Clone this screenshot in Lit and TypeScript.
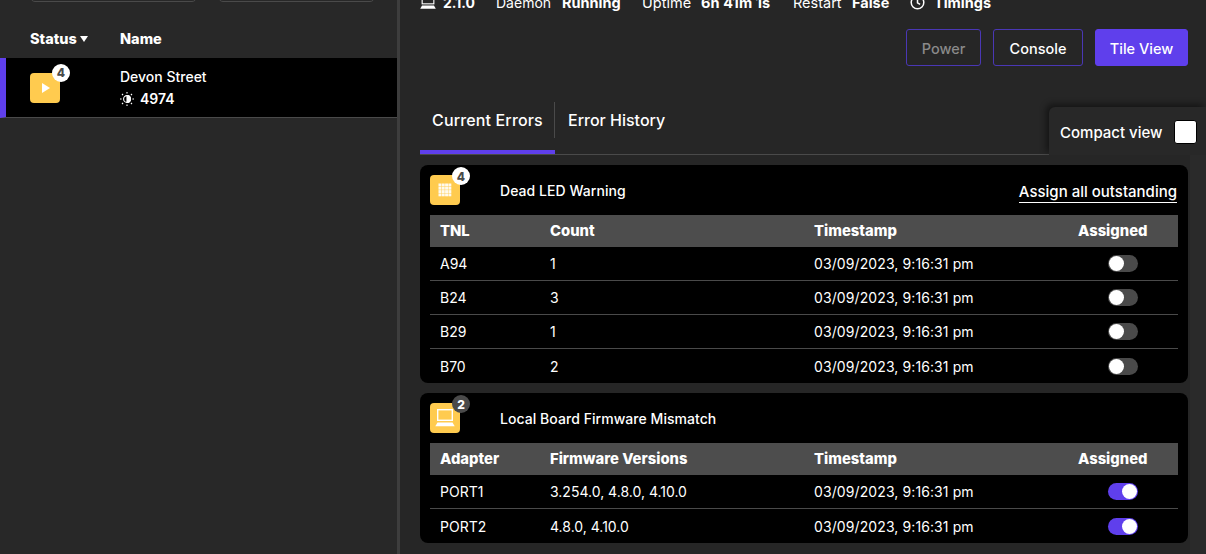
import { LitElement, html, css, svg } from "lit";
import { customElement } from "lit/decorators.js";

const gridIcon = html`<svg width="14" height="14" viewBox="0 0 14 14" fill="#fff" fill-opacity=".9">
  ${[0.5, 3.8, 7.1, 10.4].flatMap((x) => [0.5, 3.8, 7.1, 10.4].map((y) => svg`<rect x=${x} y=${y} width="2.9" height="2.9"/>`))}
</svg>`;
const laptop = (c: string, w: number) => html`<svg width=${w} height=${w} viewBox="0 0 20 20" fill="none">
  <rect x="2.7" y="1.7" width="14.6" height="10.6" stroke=${c} stroke-width="1.4" fill="none"/>
  <path d="M2.5 14.5h15l2.2 3.8H.3z" fill=${c}/>
</svg>`;
const sun = html`<svg width="14" height="14" viewBox="0 0 14 14" fill="none" stroke="#fff" stroke-width="1.1">
  <circle cx="7" cy="7" r="3.4"/>
  <path d="M7 3.6a3.4 3.4 0 0 1 0 6.8z" fill="#fff"/>
  <path d="M7 0v1.6M7 12.4V14M0 7h1.6M12.4 7H14M2 2l1.1 1.1M10.9 10.9 12 12M2 12l1.1-1.1M10.9 3.1 12 2"/>
</svg>`;
const clock = html`<svg width="15" height="15" viewBox="0 0 15 15" fill="none" stroke="#fff" stroke-width="1.5">
  <circle cx="7.5" cy="7.5" r="6.3"/><path d="M7.5 3.8v4l2.6 1.6"/>
</svg>`;

interface Card {
  title: string;
  icon: unknown;
  badge: string;
  badgeDark: boolean;
  action: boolean;
  head: [string, string];
  on: boolean;
  rows: [string, string][];
}

const cards: Card[] = [
  {
    title: "Dead LED Warning",
    icon: gridIcon,
    badge: "4",
    badgeDark: false,
    action: true,
    head: ["TNL", "Count"],
    on: false,
    rows: [["A94", "1"], ["B24", "3"], ["B29", "1"], ["B70", "2"]],
  },
  {
    title: "Local Board Firmware Mismatch",
    icon: laptop("#fff", 20),
    badge: "2",
    badgeDark: true,
    action: false,
    head: ["Adapter", "Firmware Versions"],
    on: true,
    rows: [["PORT1", "3.254.0, 4.8.0, 4.10.0"], ["PORT2", "4.8.0, 4.10.0"]],
  },
];

@customElement("app-root")
export class AppRoot extends LitElement {
  static styles = css`
    :host { display: block; width: 1206px; height: 554px; overflow: hidden; background: #262626; color: #fff; font-family: Inter, "Liberation Sans", sans-serif; font-size: 14px; }
    .page { display: flex; height: 554px; overflow: hidden; }
    .left { width: 397px; flex: none; border-right: 3px solid #3d3d3d; background: #282828; }
    .stubs { display: flex; gap: 21px; padding-left: 30px; height: 1px; }
    .stub { height: 10px; margin-top: -8px; border: 1px solid #4a4a4a; border-radius: 8px; box-sizing: border-box; }
    .stub.a { width: 167px; }
    .stub.b { width: 157px; }
    .lhead { display: flex; align-items: flex-start; height: 57px; padding: 28px 0 0 30px; box-sizing: border-box; font-weight: 800; font-size: 14.5px; line-height: 20px; }
    .lhead .st { width: 90px; display: flex; align-items: center; gap: 3px; }
    .caret { width: 0; height: 0; border-left: 4px solid transparent; border-right: 4px solid transparent; border-top: 6px solid #fff; }
    .lrow { height: 60px; box-sizing: border-box; background: #000; border-bottom: 1px solid #4a4a4a; border-left: 6px solid #5f3fec; display: flex; align-items: center; padding-left: 24px; }
    .lrow .ic { margin-right: 60px; }
    .lrow .badge { top: -9px; }
    .ic { position: relative; width: 30px; height: 30px; flex: none; background: #ffcb4f; border-radius: 4px; display: flex; align-items: center; justify-content: center; }
    .badge { position: absolute; left: 22px; top: -8px; width: 18px; height: 18px; border-radius: 50%; background: #fff; color: #4a4a4a; font-size: 12px; font-weight: 800; display: flex; align-items: center; justify-content: center; }
    .badge.dark { background: #4a4a4a; color: #fff; }
    .play { width: 0; height: 0; border-left: 8px solid #fff; border-top: 5px solid transparent; border-bottom: 5px solid transparent; margin-left: 2px; }
    .nm { font-weight: 500; line-height: 20px; }
    .sub { display: flex; align-items: center; gap: 6px; font-weight: 600; line-height: 20px; margin-top: 2px; }
    .right { flex: 1; min-width: 0; padding: 0 18px 0 20px; position: relative; }
    .right::after { content: ""; position: absolute; right: 0; top: 155px; bottom: 0; width: 16px; background: #2a2a2a; }
    .stats { display: flex; align-items: center; height: 20px; margin-top: -8px; white-space: nowrap; }
    .stats > * { flex: none; }
    .stats b { font-weight: 700; }
    .stats span { font-weight: 400; }
    .v1 { margin-left: 7px; width: 53px; }
    .k1 { width: 66px; }
    .v2 { width: 80px; font-size: 14.5px; }
    .k2 { width: 59px; font-size: 14.5px; }
    .v3 { width: 92px; font-size: 14.5px; letter-spacing: .1px; }
    .k3 { width: 59px; font-size: 14.5px; }
    .v4 { width: 58px; font-size: 14.5px; }
    .v5 { margin-left: 9px; font-size: 14.5px; }
    .btns { display: flex; justify-content: flex-end; gap: 12px; margin-top: 17px; }
    .btn { height: 37px; padding-top: 1px; box-sizing: border-box; border: 1px solid #4a37b5; border-radius: 3px; display: flex; align-items: center; justify-content: center; font-weight: 500; font-size: 14.5px; }
    .btn.off { color: #8a8a8a; width: 75px; }
    .btn.con { width: 90px; }
    .btn.tile { width: 93px; background: #5f3fec; border-color: #5f3fec; }
    .tabs { display: flex; margin-top: 36px; height: 52px; border-bottom: 1px solid #4a4a4a; font-size: 16px; font-weight: 500; }
    .tab { position: relative; line-height: 36px; height: 48px; }
    .tab.cur { width: 135px; padding-left: 12px; box-sizing: border-box; height: 52px; border-bottom: 4px solid #5f3fec; letter-spacing: .15px; }
    .tab.cur::after { content: ""; position: absolute; right: 0; top: 0; height: 36px; width: 1px; background: #4a4a4a; }
    .tab.oth { padding-left: 13px; }
    .compact { position: absolute; right: 0; top: 107px; width: 157px; height: 48px; box-sizing: border-box; background: #282828; border-radius: 6px 0 0 0; box-shadow: -3px -3px 6px rgba(0,0,0,.45); clip-path: inset(-12px 0 0 -12px); display: flex; align-items: flex-start; padding: 13px 9px 0 11px; justify-content: space-between; font-weight: 500; font-size: 15px; }
    .compact .lb { line-height: 26px; white-space: nowrap; }
    .box { width: 23px; height: 24px; background: #fff; border-radius: 3px; border: 1px solid #000; box-sizing: border-box; }
    .card { background: #000; border-radius: 8px; padding: 10px 10px 0; margin-top: 10px; overflow: hidden; position: relative; z-index: 1; }
    .chead { display: flex; align-items: center; height: 30px; }
    .chead .ic { margin-right: 40px; }
    .ct { font-weight: 500; flex: 1; letter-spacing: .05px; }
    .act { font-weight: 500; font-size: 15px; border-bottom: 1px solid #fff; line-height: 24px; height: 22px; margin-top: 2px; margin-right: 1px; }
    .grid { display: grid; grid-template-columns: 110px 264px 264px 1fr; margin-top: 10px; }
    .grid > div { padding-left: 10px; display: flex; align-items: center; height: 33px; border-bottom: 1px solid #4a4a4a; white-space: nowrap; }
    .grid .h { background: #4d4d4d; height: 32px; border-bottom: 0; font-weight: 800; font-size: 14.8px; }
    .grid .last { border-bottom: 0; height: 34px; }
    .grid .ts { letter-spacing: .1px; }
    .grid .tg { padding-left: 40px; }
    .tog { width: 30px; height: 17px; border-radius: 9px; background: #4a4a4a; position: relative; }
    .tog::after { content: ""; position: absolute; left: 1px; top: 1px; width: 15px; height: 15px; border-radius: 50%; background: #fff; }
    .tog.on { background: #5f3fec; }
    .tog.on::after { left: 14px; }
  `;

  private renderCard(c: Card) {
    return html`<section class="card">
      <div class="chead">
        <div class="ic">${c.icon}<span class="badge ${c.badgeDark ? "dark" : ""}">${c.badge}</span></div>
        <div class="ct">${c.title}</div>
        ${c.action ? html`<div class="act">Assign all outstanding</div>` : ""}
      </div>
      <div class="grid">
        <div class="h">${c.head[0]}</div><div class="h">${c.head[1]}</div><div class="h">Timestamp</div><div class="h">Assigned</div>
        ${c.rows.map((r, i) => {
          const l = i === c.rows.length - 1 ? "last" : "";
          return html`<div class=${l}>${r[0]}</div><div class=${l}>${r[1]}</div><div class="ts ${l}">03/09/2023, 9:16:31 pm</div><div class="tg ${l}"><span class="tog ${c.on ? "on" : ""}"></span></div>`;
        })}
      </div>
    </section>`;
  }

  render() {
    return html`<div class="page">
      <aside class="left">
        <div class="stubs"><div class="stub a"></div><div class="stub b"></div></div>
        <div class="lhead"><div class="st">Status<i class="caret"></i></div><div>Name</div></div>
        <div class="lrow">
          <div class="ic"><i class="play"></i><span class="badge">4</span></div>
          <div>
            <div class="nm">Devon Street</div>
            <div class="sub">${sun}<span>4974</span></div>
          </div>
        </div>
      </aside>
      <main class="right">
        <div class="stats">
          ${laptop("#fff", 16)}
          <b class="v1">2.1.0</b>
          <span class="k1">Daemon</span>
          <b class="v2">Running</b>
          <span class="k2">Uptime</span>
          <b class="v3">6h 41m 1s</b>
          <span class="k3">Restart</span>
          <b class="v4">False</b>
          ${clock}
          <b class="v5">Timings</b>
        </div>
        <div class="btns">
          <div class="btn off">Power</div>
          <div class="btn con">Console</div>
          <div class="btn tile">Tile View</div>
        </div>
        <div class="tabs">
          <div class="tab cur">Current Errors</div>
          <div class="tab oth">Error History</div>
        </div>
        <div class="compact"><span class="lb">Compact view</span><span class="box"></span></div>
        ${cards.map((c) => this.renderCard(c))}
      </main>
    </div>`;
  }
}
